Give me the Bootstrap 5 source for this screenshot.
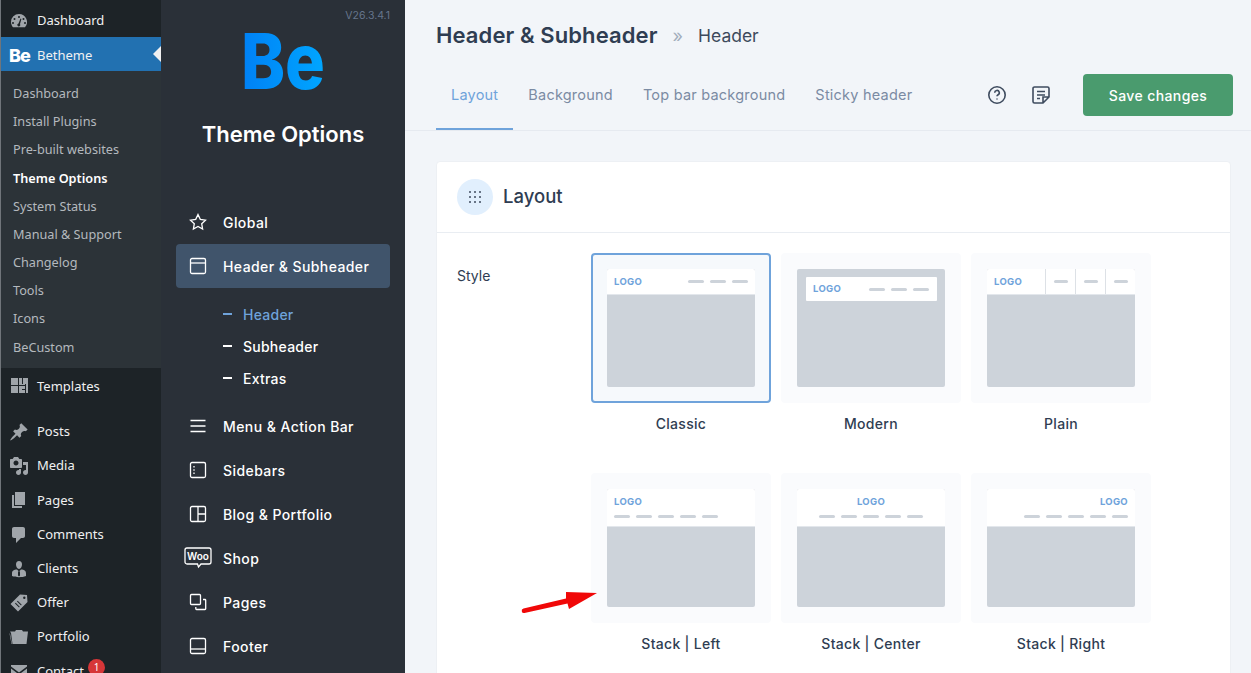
<!DOCTYPE html>
<html lang="en">
<head>
<meta charset="UTF-8" />
<title>Theme Options</title>
<link href="https://cdn.jsdelivr.net/npm/bootstrap@5.3.2/dist/css/bootstrap.min.css" rel="stylesheet" />
<style>
    html { height: 673px; overflow: hidden; }
    body { height: 673px; overflow: hidden; background: #f2f5f9; font-family: Inter, sans-serif; color: #2f3d52; }

    /* wordpress menu */
    .wp-menu { width: 161px; height: 673px; overflow: hidden; flex: none; background: #1d2327; border-left: 1px solid #70757a; padding-top: 3px; font-family: "Noto Sans", sans-serif; font-size: 13px; color: #f0f0f1; }
    .wp-item { height: 34.2px; padding: 2px 0 0 8px; gap: 8px; position: relative; }
    .wp-item svg { width: 20px; height: 20px; fill: #a0a5aa; flex: none; }
    .wp-current { background: #2271b1; }
    .wp-current::after { content: ""; position: absolute; right: 0; top: 9px; border: 8px solid transparent; border-right-color: #f0f0f1; border-left: 0; }
    .be-mark { width: 20px; font-family: Inter, sans-serif; font-weight: 800; font-size: 18px; letter-spacing: -1px; color: #fff; }
    .wp-sub { background: #2c3338; padding: 7.6px 0 7px 12px; height: 297px; font-size: 12.7px; color: #b4b9be; }
    .wp-sub div { height: 28.2px; line-height: 28.2px; }
    .wp-sub .on { color: #fff; font-weight: 600; }
    .wp-gap { height: 11.4px; }
    .wp-badge { width: 17px; height: 17px; border-radius: 50%; background: #d63638; color: #fff; font-size: 10px; line-height: 17px; text-align: center; margin-left: -4px; margin-top: -8px; }

    /* options sidebar */
    .opt-side { width: 244px; flex: none; background: #2a3038; color: #fff; padding: 0 15px; }
    .opt-ver { text-align: right; font-size: 10.5px; color: #66758c; padding-top: 8px; height: 33px; }
    .opt-logo { display: block; margin: -19px auto 0; width: 110px; height: 94px; }
    .opt-title { text-align: center; font-size: 22px; font-weight: 600; margin: 11px 0 0; line-height: 30px; height: 81px; }
    .opt-link { height: 44px; padding-left: 13px; gap: 16px; border-radius: 4px; font-size: 14px; font-weight: 500; letter-spacing: .42px; }
    .opt-link svg { width: 18px; height: 18px; fill: none; stroke: #fff; stroke-width: 1.3; flex: none; }
    .opt-link.on { background: #40546b; }
    .opt-subs { padding: 10px 0 10px 47px; font-size: 14px; font-weight: 500; letter-spacing: .25px; height: 116px; }
    .opt-subs div { height: 32px; gap: 11px; }
    .opt-subs div::before { content: ""; width: 9px; height: 1.5px; background: currentColor; }
    .opt-subs .on { color: #6fa3db; }
    .opt-link .woo-icon { margin-left: -5px; margin-right: -5px; width: 28px; height: 22px; }

    /* top header */
    .opt-main { height: 673px; overflow: hidden; }
    .top-bar { height: 131px; padding: 10px 18px 0 31px; border-bottom: 1px solid #e6eaf0; }
    .top-title { height: 50px; }
    .top-title h1 { font-size: 22px; font-weight: 600; margin: 0; letter-spacing: .1px; color: #2f3d52; }
    .top-title span { color: #a3aebd; font-size: 18px; margin: 0 15px; }
    .top-title b { font-weight: 400; font-size: 17.5px; color: #3d4a5c; padding-top: 3px; }
    .tab-row { height: 70px; }
    .tab-link { height: 70px; padding: 2px 15px 0; font-size: 14.5px; color: #7b8ba3; border-bottom: 2px solid transparent; letter-spacing: .22px; }
    .tab-link.on { color: #6fa3db; border-bottom-color: #6fa3db; }
    .top-icons { gap: 22px; }
    .top-icon { width: 22px; height: 22px; fill: none; stroke: #3f4c5f; stroke-width: 1.6; }
    .save-btn { width: 150px; height: 42px; background: #4a9b6e; color: #fff; border: 0; border-radius: 4px; font-size: 14px; font-weight: 500; letter-spacing: .4px; margin-left: 9px; }
    .save-btn:hover { background: #4a9b6e; color: #fff; }

    /* layout card */
    .opt-card { margin: 30px 20px 0 31px; border: 1px solid #edf0f4; border-radius: 4px; height: 560px; }
    .opt-card .card-header { background: #fff; flex: none; height: 71px; padding: 0 20px; gap: 10px; border-bottom: 1px solid #e9edf2; font-size: 18.5px; font-weight: 500; }
    .head-dot { width: 36px; height: 36px; border-radius: 50%; background: #e1effd; }
    .head-dot svg { width: 14px; height: 14px; fill: #3f4c5f; }
    .opt-card .card-body { padding: 20px 20px 0; }
    .style-label { width: 134px; flex: none; font-size: 14px; padding-top: 12px; font-weight: 400; }
    .tile-grid { position: relative; display: grid; grid-template-columns: repeat(3, 180px); column-gap: 10px; align-content: start; }
    .tile-box { height: 220px; text-align: center; font-size: 14px; font-weight: 500; letter-spacing: .3px; }
    .tile { height: 150px; background: #fafbfd; border-radius: 4px; padding: 16px; margin-bottom: 10px; }
    .tile.on { border: 2px solid #6fa3db; padding: 14px; background: #f6f9fc; }
    .shot { height: 118px; background: #cdd3da; border-radius: 2px; overflow: hidden; }
    .shot-head { background: #fff; height: 26px; padding: 0 7px; border-bottom: 1px solid #e3e7ec; }
    .shot-logo { font-size: 9.5px; font-weight: 700; color: #6fa3db; line-height: 1; }
    .shot-lines { gap: 6px; }
    .shot-lines i { display: block; width: 16px; height: 3px; border-radius: 2px; background: #cdd3da; }
    .shot-float { background: #fff; height: 24px; margin: 8px 8px 0 9px; padding: 0 8px 0 7px; border-radius: 1px; }
    .shot-cell { height: 100%; width: 30px; border-left: 1px solid #dde1e6; }
    .shot-cell i { display: block; width: 14px; height: 3px; border-radius: 2px; background: #cdd3da; }
    .shot-stack { background: #fff; height: 38px; padding: 8px 7px 0; border-bottom: 1px solid #e3e7ec; gap: 8px; }
    .red-arrow { position: absolute; left: -70px; top: 330px; width: 80px; height: 32px; fill: #f00808; }
</style>
</head>
<body class="d-flex">

<nav class="wp-menu">
    <div class="wp-item d-flex align-items-center"><svg viewBox="0 0 20 20"><path d="M10 3a8 8 0 0 0-8 8c0 2 .8 3.900 2 5.300h12A8 8 0 0 0 10 3zm0 2a1 1 0 1 1 0 2 1 1 0 0 1 0-2zM5.500 7a1 1 0 1 1 0 2 1 1 0 0 1 0-2zm9 0a1 1 0 1 1 0 2 1 1 0 0 1 0-2zM4 11a1 1 0 1 1 0 2 1 1 0 0 1 0-2zm12 0a1 1 0 1 1 0 2 1 1 0 0 1 0-2zm-4.500-3.500.9.400L11 13a1.500 1.500 0 1 1-1.500-.6z"/></svg>Dashboard</div>
    <div class="wp-item wp-current d-flex align-items-center"><span class="be-mark">Be</span>Betheme</div>
    <div class="wp-sub">
        <div>Dashboard</div>
        <div>Install Plugins</div>
        <div>Pre-built websites</div>
        <div class="on">Theme Options</div>
        <div>System Status</div>
        <div>Manual &amp; Support</div>
        <div>Changelog</div>
        <div>Tools</div>
        <div>Icons</div>
        <div>BeCustom</div>
    </div>
    <div class="wp-item d-flex align-items-center"><svg viewBox="0 0 20 20"><path d="M2 2h7v7H2zM2 10h7v7H2zM10 2h3v6h3v1h-6zM14 2h5v15h-2V8h-3zM10 10h6v3h-3v1h3v3h-6z"/></svg>Templates</div>
    <div class="wp-gap"></div>
    <div class="wp-item d-flex align-items-center"><svg viewBox="0 0 20 20"><path d="M10.440 3.020l1.820-1.820 6.360 6.350-1.830 1.820c-1.050-.68-2.480-.57-3.410.36l-.75.75c-.92.93-1.040 2.350-.35 3.410l-1.830 1.820-2.410-2.410-2.800 2.790c-.42.42-3.380 2.710-3.800 2.290s1.860-3.390 2.280-3.810l2.790-2.790L4.100 9.360l1.830-1.820c1.050.69 2.480.57 3.400-.36l.75-.75c.93-.92 1.050-2.350.36-3.410z"/></svg>Posts</div>
    <div class="wp-item d-flex align-items-center"><svg viewBox="0 0 20 20"><path d="M13 11V4c0-.55-.45-1-1-1h-1.670L9 1H5L3.670 3H2c-.55 0-1 .45-1 1v7c0 .55.45 1 1 1h10c.55 0 1-.45 1-1zM7 4.500c1.380 0 2.500 1.120 2.500 2.500S8.380 9.500 7 9.500 4.500 8.380 4.500 7 5.620 4.500 7 4.500zM14 6h5v10.500c0 1.380-1.120 2.500-2.500 2.500S14 17.880 14 16.500s1.120-2.500 2.500-2.500c.17 0 .34.020.5.050V9h-3V6zm-4 8.050V13h2v3.500c0 1.380-1.120 2.500-2.500 2.500S7 17.880 7 16.500 8.120 14 9.500 14c.17 0 .34.020.5.050z"/></svg>Media</div>
    <div class="wp-item d-flex align-items-center"><svg viewBox="0 0 20 20"><path d="M6 15V2h10v13H6zm-1 1h8v2H3V5h2v11z"/></svg>Pages</div>
    <div class="wp-item d-flex align-items-center"><svg viewBox="0 0 20 20"><path d="M5 2h9c1.100 0 2 .9 2 2v7c0 1.100-.9 2-2 2h-2l-5 5v-5H5c-1.100 0-2-.9-2-2V4c0-1.100.9-2 2-2z"/></svg>Comments</div>
    <div class="wp-item d-flex align-items-center"><svg viewBox="0 0 20 20"><path d="M10 2c2 0 3 1.500 3 3.500S11.800 10 10 10 7 7.500 7 5.500 8 2 10 2zM8 10.500l1.500 1.500L9 13.500v3l1 1 1-1v-3l-.5-1.500 1.500-1.500c3 0 5 1 5 4v2.500c-2 .8-4.500 1.200-7 1.200s-5-.4-7-1.200V14.500c0-3 2-4 5-4z"/></svg>Clients</div>
    <div class="wp-item d-flex align-items-center"><svg viewBox="0 0 20 20"><path d="M11 1.500l7 .5.500 7-9.500 9.500L1.500 11zm4.300 2a1.200 1.200 0 1 0 0 2.400 1.200 1.200 0 0 0 0-2.400zM6 10.500l4 4 .7-.7-4-4zm2-2 4 4 .7-.7-4-4z"/></svg>Offer</div>
    <div class="wp-item d-flex align-items-center"><svg viewBox="0 0 20 20"><path d="M2 6l-1-1.500h5L7 3h6l1 1.500h5L17.500 17H3.500zM1 6.500 3 17H2.500L.5 6.500z"/></svg>Portfolio</div>
    <div class="wp-item d-flex align-items-center gap-2"><svg viewBox="0 0 20 20"><path d="M2 4h16v1.500l-8 6-8-6zm0 3.500 8 6 8-6V16H2z"/></svg>Contact <span class="wp-badge">1</span></div>
</nav>

<aside class="opt-side">
    <div class="opt-ver">V26.3.4.1</div>
    <svg class="opt-logo" viewBox="-13 -19 110 94">
        <defs><linearGradient id="beGrad" x1="0" y1="0" x2="1" y2="0"><stop offset="0" stop-color="#0080f5"/><stop offset="1" stop-color="#00a6ff"/></linearGradient></defs>
        <text x="0" y="56" font-family="Inter, sans-serif" font-weight="800" font-size="77" textLength="84" lengthAdjust="spacingAndGlyphs" fill="url(#beGrad)">Be</text>
    </svg>
    <h2 class="opt-title">Theme Options</h2>

    <div class="opt-link d-flex align-items-center"><svg viewBox="0 0 18 18"><path d="M9 1.500l2.300 4.900 5.200.7-3.800 3.600.9 5.300L9 13.500l-4.600 2.500.9-5.300L1.500 7.100l5.200-.7z"/></svg>Global</div>
    <div class="opt-link on d-flex align-items-center"><svg viewBox="0 0 18 18"><rect x="1.500" y="1.500" width="15" height="15" rx="1.500"/><path d="M1.500 6h15"/></svg>Header &amp; Subheader</div>
    <div class="opt-subs">
        <div class="on d-flex align-items-center">Header</div>
        <div class="d-flex align-items-center">Subheader</div>
        <div class="d-flex align-items-center">Extras</div>
    </div>
    <div class="opt-link d-flex align-items-center"><svg viewBox="0 0 18 18"><path d="M1.500 3.500h15M1.500 9h15M1.500 14.500h15"/></svg>Menu &amp; Action Bar</div>
    <div class="opt-link d-flex align-items-center"><svg viewBox="0 0 18 18"><rect x="1.500" y="1.500" width="15" height="15" rx="1.500"/><path d="M5 5v1.500M5 8.300v1.500M5 11.500V13"/></svg>Sidebars</div>
    <div class="opt-link d-flex align-items-center"><svg viewBox="0 0 18 18"><rect x="1.500" y="1.500" width="15" height="15" rx="1.500"/><path d="M9 1.500v15M9 9h7.500"/></svg>Blog &amp; Portfolio</div>
    <div class="opt-link d-flex align-items-center"><svg class="woo-icon" viewBox="0 0 28 22"><path d="M3 1h22a2 2 0 0 1 2 2v12a2 2 0 0 1-2 2h-8l-2.500 3-1-3H3a2 2 0 0 1-2-2V3a2 2 0 0 1 2-2z"/><text x="14" y="13" text-anchor="middle" font-family="Inter, sans-serif" font-size="10" font-weight="600" letter-spacing="0" fill="#fff" stroke="none">Woo</text></svg>Shop</div>
    <div class="opt-link d-flex align-items-center"><svg viewBox="0 0 18 18"><rect x="1.500" y="1.500" width="10" height="10" rx="1"/><path d="M14 6.500h2a.7.700 0 0 1 .7.700v8.600a.7.700 0 0 1-.7.700H7.500a.7.700 0 0 1-.7-.7V14"/></svg>Pages</div>
    <div class="opt-link d-flex align-items-center"><svg viewBox="0 0 18 18"><rect x="1.500" y="1.500" width="15" height="15" rx="1.500"/><path d="M1.500 12h15"/></svg>Footer</div>
</aside>

<main class="opt-main flex-grow-1">
    <div class="top-bar">
        <div class="top-title d-flex align-items-center">
            <h1>Header &amp; Subheader</h1><span>»</span><b>Header</b>
        </div>
        <div class="tab-row d-flex align-items-center">
            <div class="tab-link on d-flex align-items-center">Layout</div>
            <div class="tab-link d-flex align-items-center">Background</div>
            <div class="tab-link d-flex align-items-center">Top bar background</div>
            <div class="tab-link d-flex align-items-center">Sticky header</div>
            <div class="ms-auto top-icons d-flex align-items-center">
                <svg class="top-icon" viewBox="0 0 22 22"><circle cx="11" cy="11" r="8.200"/><path d="M8.700 8.700a2.300 2.300 0 1 1 3.400 2c-.8.500-1.100.9-1.100 1.600"/><path d="M11 14.600v.8"/></svg>
                <svg class="top-icon" viewBox="0 0 22 22"><path d="M13 19H4.500A1.500 1.500 0 0 1 3 17.500v-13A1.500 1.500 0 0 1 4.500 3h13A1.500 1.500 0 0 1 19 4.500V13zM13 19v-6h6M7 7.500h8M7 11h8M7 14.500h3"/></svg>
                <button class="btn save-btn">Save changes</button>
            </div>
        </div>
    </div>

    <div class="card opt-card">
        <div class="card-header d-flex align-items-center">
            <span class="head-dot d-flex align-items-center justify-content-center">
                <svg viewBox="0 0 14 14"><circle cx="2" cy="2" r="1"/><circle cx="7" cy="2" r="1"/><circle cx="12" cy="2" r="1"/><circle cx="2" cy="7" r="1"/><circle cx="7" cy="7" r="1"/><circle cx="12" cy="7" r="1"/><circle cx="2" cy="12" r="1"/><circle cx="7" cy="12" r="1"/><circle cx="12" cy="12" r="1"/></svg>
            </span>
            Layout
        </div>
        <div class="card-body d-flex">
            <div class="style-label">Style</div>
            <div class="tile-grid">
                <div class="tile-box">
                    <div class="tile on"><div class="shot">
                        <div class="shot-head d-flex align-items-center justify-content-between"><span class="shot-logo">LOGO</span><span class="shot-lines d-flex"><i></i><i></i><i></i></span></div>
                    </div></div>
                    Classic
                </div>
                <div class="tile-box">
                    <div class="tile"><div class="shot">
                        <div class="shot-float d-flex align-items-center justify-content-between"><span class="shot-logo">LOGO</span><span class="shot-lines d-flex"><i></i><i></i><i></i></span></div>
                    </div></div>
                    Modern
                </div>
                <div class="tile-box">
                    <div class="tile"><div class="shot">
                        <div class="shot-head d-flex align-items-center justify-content-between pe-0"><span class="shot-logo">LOGO</span><span class="d-flex h-100">
                            <span class="shot-cell d-flex align-items-center justify-content-center"><i></i></span>
                            <span class="shot-cell d-flex align-items-center justify-content-center"><i></i></span>
                            <span class="shot-cell d-flex align-items-center justify-content-center"><i></i></span>
                        </span></div>
                    </div></div>
                    Plain
                </div>
                <div class="tile-box">
                    <div class="tile"><div class="shot">
                        <div class="shot-stack d-flex flex-column align-items-start"><span class="shot-logo">LOGO</span><span class="shot-lines d-flex"><i></i><i></i><i></i><i></i><i></i></span></div>
                    </div></div>
                    Stack | Left
                </div>
                <div class="tile-box">
                    <div class="tile"><div class="shot">
                        <div class="shot-stack d-flex flex-column align-items-center"><span class="shot-logo">LOGO</span><span class="shot-lines d-flex"><i></i><i></i><i></i><i></i><i></i></span></div>
                    </div></div>
                    Stack | Center
                </div>
                <div class="tile-box">
                    <div class="tile"><div class="shot">
                        <div class="shot-stack d-flex flex-column align-items-end"><span class="shot-logo">LOGO</span><span class="shot-lines d-flex"><i></i><i></i><i></i><i></i><i></i></span></div>
                    </div></div>
                    Stack | Right
                </div>
                <svg class="red-arrow" viewBox="0 0 80 32"><path d="M45 9 76 10 48 26 46.500 20.500 3.500 30a2.300 2.300 0 0 1-1-4.500L45 15.500z"/></svg>
            </div>
        </div>
    </div>
</main>

<script src="https://cdn.jsdelivr.net/npm/bootstrap@5.3.2/dist/js/bootstrap.bundle.min.js"></script>
</body>
</html>
